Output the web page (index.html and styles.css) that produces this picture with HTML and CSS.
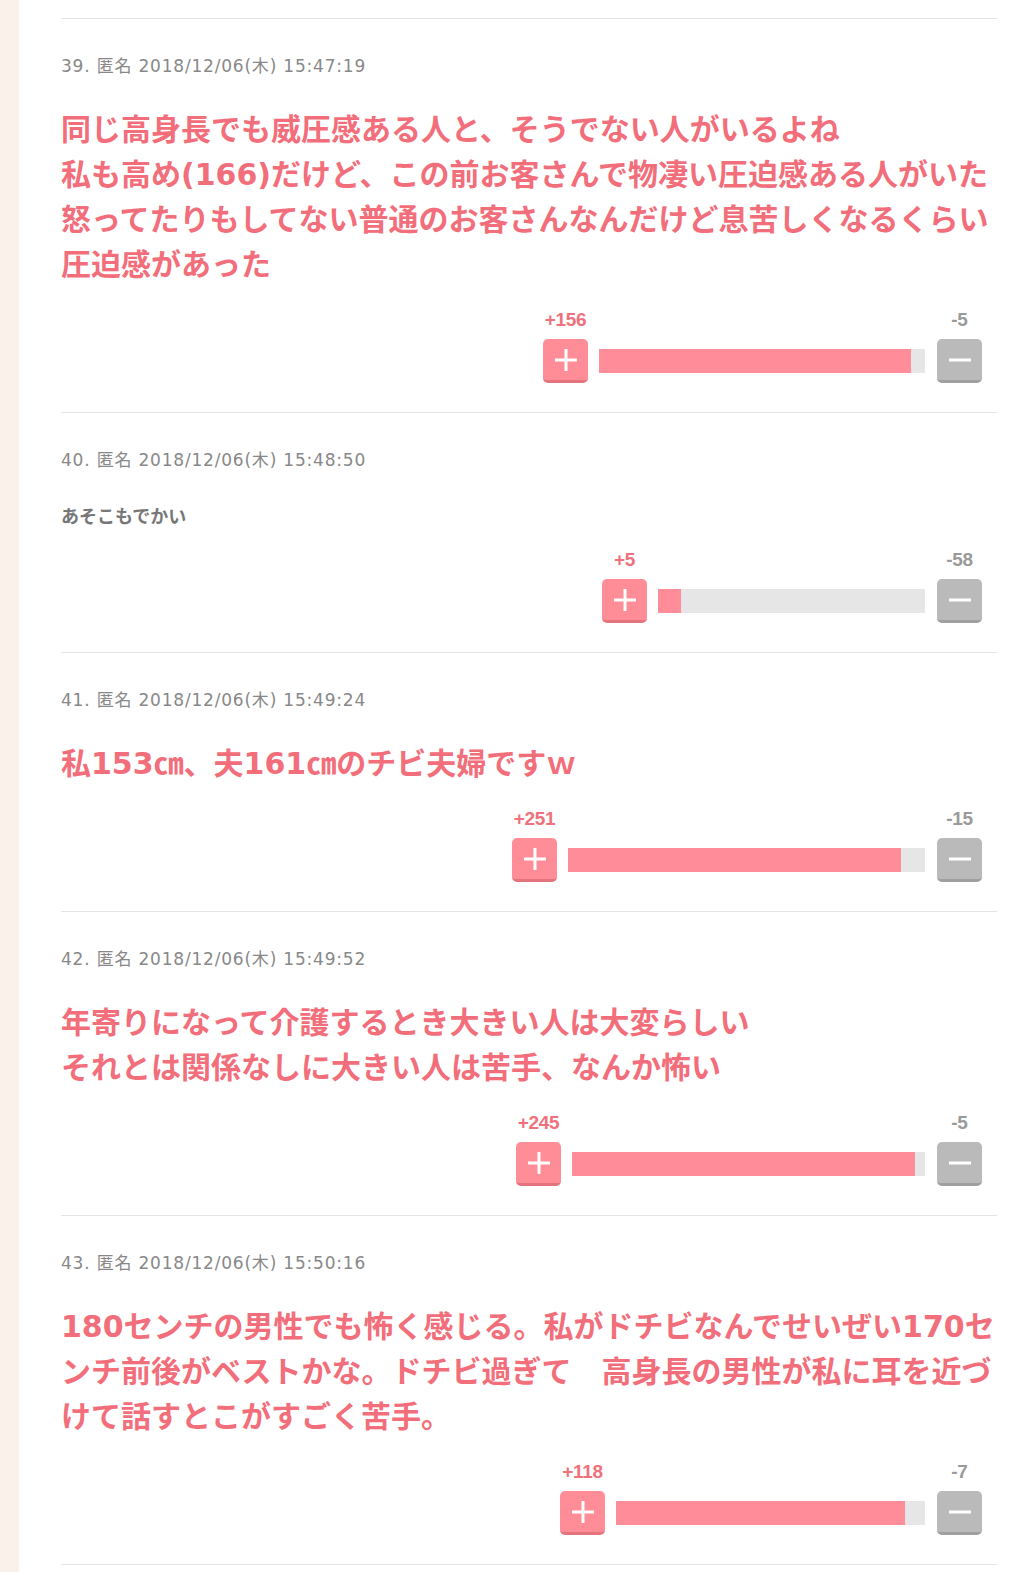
FILE: index.html
```html
<!DOCTYPE html>
<html lang="ja">
<head>
<meta charset="utf-8">
<title>comments</title>
<link rel="stylesheet" href="styles.css">
</head>
<body>
<div class="page">
  <div class="side"></div>
  <main class="main">
    <section class="comment">
      <p class="meta">39. 匿名 2018/12/06(木) 15:47:19</p>
      <p class="body body-big">同じ高身長でも威圧感ある人と、そうでない人がいるよね<br>私も高め(166)だけど、この前お客さんで物凄い圧迫感ある人がいた<br>怒ってたりもしてない普通のお客さんなんだけど息苦しくなるくらい<br>圧迫感があった</p>
      <div class="vote">
        <div class="vote-col"><span class="count count-plus">+156</span><span class="btn btn-plus"><svg width="22" height="22" viewBox="0 0 22 22"><path d="M11 0v22M0 11h22" stroke="#fff" stroke-width="3"/></svg></span></div>
        <div class="bar" style="width:326px"><div class="fill" style="width:95.7%"></div></div>
        <div class="vote-col"><span class="count count-minus">-5</span><span class="btn btn-minus"><svg width="22" height="22" viewBox="0 0 22 22"><path d="M0 11h22" stroke="#fff" stroke-width="3"/></svg></span></div>
      </div>
    </section>
    <section class="comment">
      <p class="meta">40. 匿名 2018/12/06(木) 15:48:50</p>
      <p class="body body-small">あそこもでかい</p>
      <div class="vote">
        <div class="vote-col"><span class="count count-plus">+5</span><span class="btn btn-plus"><svg width="22" height="22" viewBox="0 0 22 22"><path d="M11 0v22M0 11h22" stroke="#fff" stroke-width="3"/></svg></span></div>
        <div class="bar" style="width:267px"><div class="fill" style="width:8.6%"></div></div>
        <div class="vote-col"><span class="count count-minus">-58</span><span class="btn btn-minus"><svg width="22" height="22" viewBox="0 0 22 22"><path d="M0 11h22" stroke="#fff" stroke-width="3"/></svg></span></div>
      </div>
    </section>
    <section class="comment">
      <p class="meta">41. 匿名 2018/12/06(木) 15:49:24</p>
      <p class="body body-big">私153㎝、夫161㎝のチビ夫婦ですｗ</p>
      <div class="vote">
        <div class="vote-col"><span class="count count-plus">+251</span><span class="btn btn-plus"><svg width="22" height="22" viewBox="0 0 22 22"><path d="M11 0v22M0 11h22" stroke="#fff" stroke-width="3"/></svg></span></div>
        <div class="bar" style="width:357px"><div class="fill" style="width:93.3%"></div></div>
        <div class="vote-col"><span class="count count-minus">-15</span><span class="btn btn-minus"><svg width="22" height="22" viewBox="0 0 22 22"><path d="M0 11h22" stroke="#fff" stroke-width="3"/></svg></span></div>
      </div>
    </section>
    <section class="comment">
      <p class="meta">42. 匿名 2018/12/06(木) 15:49:52</p>
      <p class="body body-big">年寄りになって介護するとき大きい人は大変らしい<br>それとは関係なしに大きい人は苦手、なんか怖い</p>
      <div class="vote">
        <div class="vote-col"><span class="count count-plus">+245</span><span class="btn btn-plus"><svg width="22" height="22" viewBox="0 0 22 22"><path d="M11 0v22M0 11h22" stroke="#fff" stroke-width="3"/></svg></span></div>
        <div class="bar" style="width:353px"><div class="fill" style="width:97.2%"></div></div>
        <div class="vote-col"><span class="count count-minus">-5</span><span class="btn btn-minus"><svg width="22" height="22" viewBox="0 0 22 22"><path d="M0 11h22" stroke="#fff" stroke-width="3"/></svg></span></div>
      </div>
    </section>
    <section class="comment">
      <p class="meta">43. 匿名 2018/12/06(木) 15:50:16</p>
      <p class="body body-big">180センチの男性でも怖く感じる。私がドチビなんでせいぜい170センチ前後がベストかな。ドチビ過ぎて　高身長の男性が私に耳を近づけて話すとこがすごく苦手。</p>
      <div class="vote">
        <div class="vote-col"><span class="count count-plus">+118</span><span class="btn btn-plus"><svg width="22" height="22" viewBox="0 0 22 22"><path d="M11 0v22M0 11h22" stroke="#fff" stroke-width="3"/></svg></span></div>
        <div class="bar" style="width:309px"><div class="fill" style="width:93.5%"></div></div>
        <div class="vote-col"><span class="count count-minus">-7</span><span class="btn btn-minus"><svg width="22" height="22" viewBox="0 0 22 22"><path d="M0 11h22" stroke="#fff" stroke-width="3"/></svg></span></div>
      </div>
    </section>
    <div class="end"></div>
  </main>
</div>
</body>
</html>
```
FILE: styles.css
```css
html, body {
  margin: 0;
  padding: 0;
  background: #fff;
}
body {
  font-family: "Noto Sans CJK JP", sans-serif;
}
.page {
  display: flex;
  min-height: 100vh;
}
.side {
  width: 19px;
  flex: none;
  background: #faf2ea;
}
.main {
  width: 936px;
  margin-left: 42px;
  padding-top: 18px;
}
.comment {
  border-top: 1px solid #e3e3e3;
  padding: 35px 0 29px;
}
.end {
  border-top: 1px solid #e3e3e3;
}
.meta {
  margin: 0;
  font-family: "DejaVu Sans", "Noto Sans CJK JP", sans-serif;
  font-size: 17px;
  letter-spacing: 0.8px;
  line-height: 24px;
  color: #888;
}
.body {
  font-family: "DejaVu Sans", "Noto Sans CJK JP", sans-serif;
  font-weight: 700;
  line-height: 1.5;
}
.body-big {
  font-size: 30px;
  color: #f26e7a;
  margin: 29px 0 23px;
}
.body-small {
  font-size: 18px;
  color: #777;
  margin: 31px 0 20px;
}
.vote {
  display: flex;
  justify-content: flex-end;
  align-items: flex-end;
  padding-right: 15px;
}
.vote-col {
  display: flex;
  flex-direction: column;
  align-items: center;
  width: 45px;
}
.count {
  font-family: "Liberation Sans", Arial, sans-serif;
  font-weight: 700;
  font-size: 19px;
  line-height: 20px;
  letter-spacing: -0.3px;
  margin-bottom: 9px;
  white-space: nowrap;
}
.count-plus {
  color: #ef717b;
}
.count-minus {
  color: #9a9a9a;
}
.btn {
  box-sizing: border-box;
  width: 45px;
  height: 44px;
  border-radius: 5px;
  display: flex;
  align-items: center;
  justify-content: center;
}
.btn-plus {
  background: #ff8d98;
  border-bottom: 3px solid #e5737e;
}
.btn-minus {
  background: #bababa;
  border-bottom: 3px solid #9f9f9f;
}
.btn svg {
  display: block;
}
.bar {
  height: 24px;
  margin: 0 12px 10px 11px;
  background: #e6e6e6;
  display: flex;
}
.fill {
  height: 100%;
  background: #ff8d99;
}
```
